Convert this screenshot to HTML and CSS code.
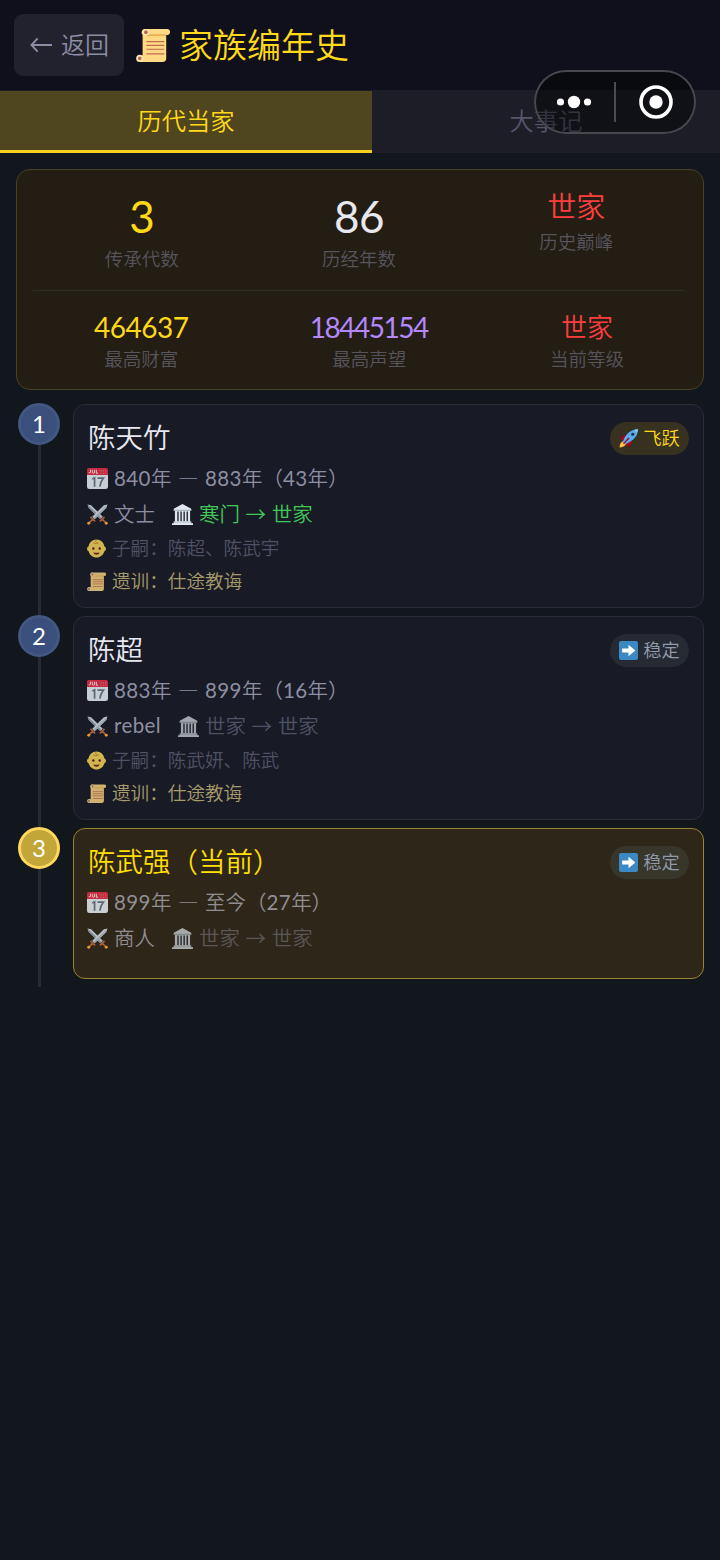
FILE: index.html
```html
<!DOCTYPE html>
<html lang="zh-CN">
<head>
<meta charset="utf-8">
<title>家族编年史</title>
<link rel="stylesheet" href="styles.css">
</head>
<body>
<svg class="defs" aria-hidden="true">
  <symbol id="scroll" viewBox="0 0 36 36">
    <path fill="#ffd983" d="M9 1h24a3 3 0 0 1 3 3.500C36 7 34 7.500 32 7.500V32a4 4 0 0 1-4 4H4V29h3V7c-2-1-1-6 2-6z"/>
    <circle cx="4" cy="32.200" r="3.800" fill="#ffe8b6"/><circle cx="4" cy="32.200" r="1.900" fill="#c1694f"/>
    <path fill="#e39f3d" d="M12 7h20v1.200H11z"/>
    <circle cx="10.500" cy="4.500" r="3.500" fill="#ffe8b6"/><circle cx="10.500" cy="4.500" r="2" fill="#c1694f"/>
    <path stroke="#c1694f" stroke-width="1.300" d="M11 14.500h19M11 18.500h19M11 22.500h19M11 27.500h19"/>
  </symbol>
  <symbol id="calendar" viewBox="0 0 36 36">
    <path fill="#e0e7ec" d="M0 8h36v24a4 4 0 0 1-4 4H4a4 4 0 0 1-4-4z"/>
    <path fill="#dd2e44" d="M3 0h30a3 3 0 0 1 3 3v9H0V3a3 3 0 0 1 3-3z"/>
    <path fill="none" stroke="#f5f8fa" stroke-width="1.500" d="M6 3v4q0 2-3 1M9 3v4q0 2 2 2t2-2V3M16 3v6h3"/>
    <path fill="#f4abba" opacity=".5" d="M23 4h2v2h-2zm4 0h2v2h-2zm4 0h2v2h-2zm-8 4h2v2h-2zm4 0h2v2h-2zm4 0h2v2h-2z"/>
    <path fill="none" stroke="#66757f" stroke-width="3" d="M9 19l4-2v15M18 17.500h10q-5 6-6 14.500"/>
  </symbol>
  <symbol id="swords" viewBox="0 0 36 36">
    <path fill="#ccd6dd" d="M1 1l6 1 20 20-4 4L3 7z"/>
    <path fill="#8899a6" d="M1 1l24 23-2 2L3 7z"/>
    <path fill="#ccd6dd" d="M35 1l-6 1L9 22l4 4L33 7z"/>
    <path fill="#aab8c2" d="M35 1L11 24l2 2L33 7z"/>
    <path fill="none" stroke="#be6742" stroke-width="3" d="M6 22l8 8M30 22l-8 8M10 26l-7 7M26 26l7 7"/>
    <circle cx="3" cy="33" r="2.500" fill="#ffac33"/><circle cx="33" cy="33" r="2.500" fill="#ffac33"/>
  </symbol>
  <symbol id="temple" viewBox="0 0 36 36">
    <path fill="#e1e8ed" d="M18 0l15 8v3H3V8zM5 12h26v18H5zM3 30h30v3h3v3H0v-3h3z"/>
    <path fill="#292f3a" d="M9 13h2.500v16H9zm5.300 0h2.500v16h-2.500zm5.300 0h2.500v16h-2.500zm5.300 0h2.500v16h-2.500z"/>
    <path fill="#aab8c2" d="M3 10h30v2H3zM3 30h30v1.500H3z"/>
  </symbol>
  <symbol id="baby" viewBox="0 0 36 36">
    <path fill="#ffdc5d" d="M18 1c8 0 14 6 15 13 4 1 4 8 0 9-2 7-8 12-15 12S5 30 3 23c-4-1-4-8 0-9C4 7 10 1 18 1z"/>
    <path fill="none" stroke="#d99a3b" stroke-width="2" d="M12 7q5 4 10 0M18 2q-4 3 1 5"/>
    <circle cx="12" cy="18" r="2.300" fill="#662113"/><circle cx="24" cy="18" r="2.300" fill="#662113"/>
    <path fill="#7b2716" d="M12 25q6 2 12 0-1 5-6 5t-6-5z"/>
  </symbol>
  <symbol id="rocket" viewBox="0 0 36 36">
    <path fill="#a0041e" d="M2 18l7-7 9 2-7 12zM18 34l7-7-2-9-12 7z"/>
    <path fill="#ffac33" d="M1 35q0-9 6-12l6 6q-3 6-12 6z"/>
    <path fill="#ffcc4d" d="M2 34q2-6 5-8l3 3q-2 4-8 5z"/>
    <path fill="#55acee" d="M36 0q0 12-9 20-7 6-15 9l-5-5q3-9 9-15Q24 1 36 0z"/>
    <path fill="#a0041e" d="M8 27l10-11 2 2L9 29z"/>
    <circle cx="26" cy="10" r="3" fill="#292f33"/><path fill="#8ccaf7" d="M29 2l7-2-2 7z"/>
  </symbol>
  <symbol id="next" viewBox="0 0 36 36">
    <rect width="36" height="36" rx="4" fill="#3b88c3"/>
    <path fill="#fff" d="M6 14h12V7l13 11-13 11v-7H6z"/>
  </symbol>
</svg>

<header class="header">
  <button class="back"><svg class="back-arrow" viewBox="0 0 24 16"><path d="M8 1L1.500 8 8 15M1.500 8H23"/></svg><span>返回</span></button>
  <h1 class="title"><svg class="title-icon"><use href="#scroll"/></svg><span>家族编年史</span></h1>
</header>
<nav class="tabs">
  <div class="tab active">历代当家</div>
  <div class="tab">大事记</div>
</nav>
<div class="capsule">
  <svg viewBox="0 0 162 64">
    <g fill="#fff"><circle cx="26.500" cy="32" r="3.600"/><circle cx="40" cy="32" r="6.200"/><circle cx="53.500" cy="32" r="3.600"/><circle cx="122" cy="32" r="6.700"/></g>
    <path stroke="#4b4b51" stroke-width="2" d="M81 12v40"/>
    <circle cx="122" cy="32" r="15" fill="none" stroke="#fff" stroke-width="3.600"/>
  </svg>
</div>

<main class="content">
  <section class="summary">
    <div class="overview">
      <div class="stat"><div class="big gold">3</div><div class="label">传承代数</div></div>
      <div class="stat"><div class="big">86</div><div class="label">历经年数</div></div>
      <div class="stat"><div class="peak red">世家</div><div class="label">历史巅峰</div></div>
    </div>
    <div class="records">
      <div class="stat"><div class="num gold">464637</div><div class="label">最高财富</div></div>
      <div class="stat"><div class="num purple">18445154</div><div class="label">最高声望</div></div>
      <div class="stat"><div class="num rank red">世家</div><div class="label">当前等级</div></div>
    </div>
  </section>

  <section class="timeline">
    <article class="item">
      <div class="rail"><div class="dot">1</div></div>
      <div class="card">
        <div class="card-head"><h2 class="name">陈天竹</h2><span class="badge rise"><svg><use href="#rocket"/></svg><span>飞跃</span></span></div>
        <div class="row date"><svg><use href="#calendar"/></svg><span><b>840</b>年 <i>—</i> <b>883</b>年（<b>43</b>年）</span></div>
        <div class="row job"><svg><use href="#swords"/></svg><span>文士</span><svg class="temple"><use href="#temple"/></svg><span class="change up">寒门 <i>→</i> 世家</span></div>
        <div class="row small kids"><svg><use href="#baby"/></svg><span>子嗣：陈超、陈武宇</span></div>
        <div class="row small motto"><svg><use href="#scroll"/></svg><span>遗训：仕途教诲</span></div>
      </div>
    </article>
    <article class="item">
      <div class="rail"><div class="dot">2</div></div>
      <div class="card">
        <div class="card-head"><h2 class="name">陈超</h2><span class="badge"><svg><use href="#next"/></svg><span>稳定</span></span></div>
        <div class="row date"><svg><use href="#calendar"/></svg><span><b>883</b>年 <i>—</i> <b>899</b>年（<b>16</b>年）</span></div>
        <div class="row job"><svg><use href="#swords"/></svg><span><b>rebel</b></span><svg class="temple dim"><use href="#temple"/></svg><span class="change">世家 <i>→</i> 世家</span></div>
        <div class="row small kids"><svg><use href="#baby"/></svg><span>子嗣：陈武妍、陈武</span></div>
        <div class="row small motto"><svg><use href="#scroll"/></svg><span>遗训：仕途教诲</span></div>
      </div>
    </article>
    <article class="item current">
      <div class="rail"><div class="dot">3</div></div>
      <div class="card">
        <div class="card-head"><h2 class="name">陈武强（当前）</h2><span class="badge"><svg><use href="#next"/></svg><span>稳定</span></span></div>
        <div class="row date"><svg><use href="#calendar"/></svg><span><b>899</b>年 <i>—</i> 至今（<b>27</b>年）</span></div>
        <div class="row job"><svg><use href="#swords"/></svg><span>商人</span><svg class="temple dim"><use href="#temple"/></svg><span class="change">世家 <i>→</i> 世家</span></div>
      </div>
    </article>
  </section>
</main>
</body>
</html>
```
FILE: styles.css
```css
* { box-sizing: border-box; }
body {
  margin: 0;
  min-height: 1560px;
  position: relative;
  background: #12161d;
  color: #e8e8f0;
  font-family: "Lato", "Noto Sans CJK SC", sans-serif;
  font-weight: 350;
}
h1, h2 { margin: 0; font-weight: inherit; }
span, h2, .tab, .label { white-space: nowrap; }
.defs { display: none; }
.gold { color: #ffd818; }
.red { color: #ff3e3e; }
.purple { color: #b388ff; }

.header {
  display: flex;
  align-items: center;
  height: 91px;
  padding: 0 14px;
  gap: 12px;
  background: #0f101b;
  border-bottom: 1px solid #1c1d25;
}
.back {
  display: flex;
  align-items: center;
  gap: 8px;
  width: 110px;
  height: 62px;
  padding: 0 0 0 16px;
  border: 0;
  border-radius: 9px;
  background: #22222e;
  color: #8d8da3;
  font: inherit;
  font-size: 24px;
}
.back span { padding-bottom: 3px; }
.back-arrow { width: 23px; height: 16px; fill: none; stroke: #8d8da3; stroke-width: 2; flex: none; }
.title {
  display: flex;
  align-items: center;
  gap: 9px;
  color: #ffd91a;
  font-size: 34px;
  line-height: 50px;
}
.title-icon { width: 34px; height: 34px; }

.tabs { display: flex; height: 62px; }
.tab {
  flex: 0 0 348px;
  background: #1c1d26;
  color: #55566a;
  font-size: 24.300px;
  line-height: 60px;
  text-align: center;
}
.tab.active {
  flex-basis: 372px;
  background: #4f451e;
  border-bottom: 3px solid #f5cf20;
  color: #ffd91a;
}
.capsule {
  position: absolute;
  left: 534px;
  top: 70px;
  width: 162px;
  height: 64px;
  border-radius: 32px;
  background: rgba(0, 0, 0, .4);
  box-shadow: inset 0 0 0 2px #47474e;
}
.capsule svg { display: block; width: 162px; height: 64px; }

.content { padding: 16px; }
.summary {
  height: 221px;
  padding: 17px 18px 0 16px;
  border: 1px solid #494026;
  border-radius: 14px;
  background: #231d13;
}
.overview { display: flex; height: 104px; border-bottom: 1px solid #2f2b26; }
.overview .stat { flex: 1; }
.stat { text-align: center; }
.big { font-size: 44px; line-height: 58px; margin-bottom: 2px; font-weight: 400; letter-spacing: -.500px; }
.peak { font-size: 29px; line-height: 40px; margin-bottom: 3px; }
.label { color: #57545d; font-size: 18.500px; line-height: 24px; }
.records { display: flex; justify-content: space-around; padding-top: 20px; }
.num { font-size: 28px; line-height: 32px; margin-bottom: 4px; letter-spacing: -.5px; font-weight: 400; }
.num.purple { letter-spacing: -1.500px; margin-left: -1px; }
.num.rank { font-size: 26px; letter-spacing: 0; font-weight: 350; }

.timeline { padding-top: 14px; }
.item { display: flex; }
.rail {
  width: 57px;
  padding-left: 2px;
  background: linear-gradient(#262a34, #262a34) 22px 0 / 3px 100% no-repeat;
}
.dot {
  width: 42px;
  height: 42px;
  margin-top: -1px;
  border: 3px solid #425782;
  border-radius: 50%;
  background: #3b4f7c;
  color: #fff;
  font-size: 24px;
  font-weight: 400;
  line-height: 35px;
  text-align: center;
}
.card {
  flex: 1;
  height: 204px;
  margin-bottom: 8px;
  padding: 13px 14px 0 13px;
  border: 1px solid #2a2d38;
  border-radius: 12px;
  background: #181a25;
}
.card-head { display: flex; justify-content: space-between; align-items: center; height: 40px; padding-left: 1px; }
.name { font-size: 27.500px; line-height: 40px; }
.badge {
  display: flex;
  align-items: center;
  justify-content: center;
  gap: 5px;
  width: 79px;
  height: 33px;
  border-radius: 17px;
  background: #262a32;
  color: #8f9bad;
  font-size: 18.300px;
}
.badge span { padding-bottom: 2px; }
.badge svg { width: 19px; height: 19px; }
.badge.rise { background: #37321f; color: #ffd91a; }
.row { display: flex; align-items: center; color: #8d8ea3; font-size: 20.500px; }
.row span { padding-bottom: 3px; }
.row b { font-weight: 400; letter-spacing: .4px; }
.row i { font-style: normal; font-family: "Noto Sans CJK SC", sans-serif; }
.row svg { flex: none; width: 21px; height: 21px; margin-right: 6px; opacity: .88; }
.date { height: 35px; margin-top: 3px; }
.date i { margin: 0 1px; }
.job { height: 36px; }
.row .temple { margin-left: 17px; opacity: 1; }
.row .dim { opacity: .68; }
.change { color: #505366; }
.change.up { color: #40c957; }
.small { font-size: 18.600px; }
.small svg { width: 19px; height: 19px; opacity: .8; }
.kids { height: 32px; color: #4f5265; }
.motto { height: 34px; color: #a79b6c; }
.current .card { height: 151px; background: #2e2618; border-color: #9a842d; }
.current .name { color: #ffdf00; }
.current .dot { background: #c3a638; border-color: #ffd75e; }
.current .row { color: #918e94; }
.current .change { color: #5b5759; }
.current .badge { background: #38352a; }
```
